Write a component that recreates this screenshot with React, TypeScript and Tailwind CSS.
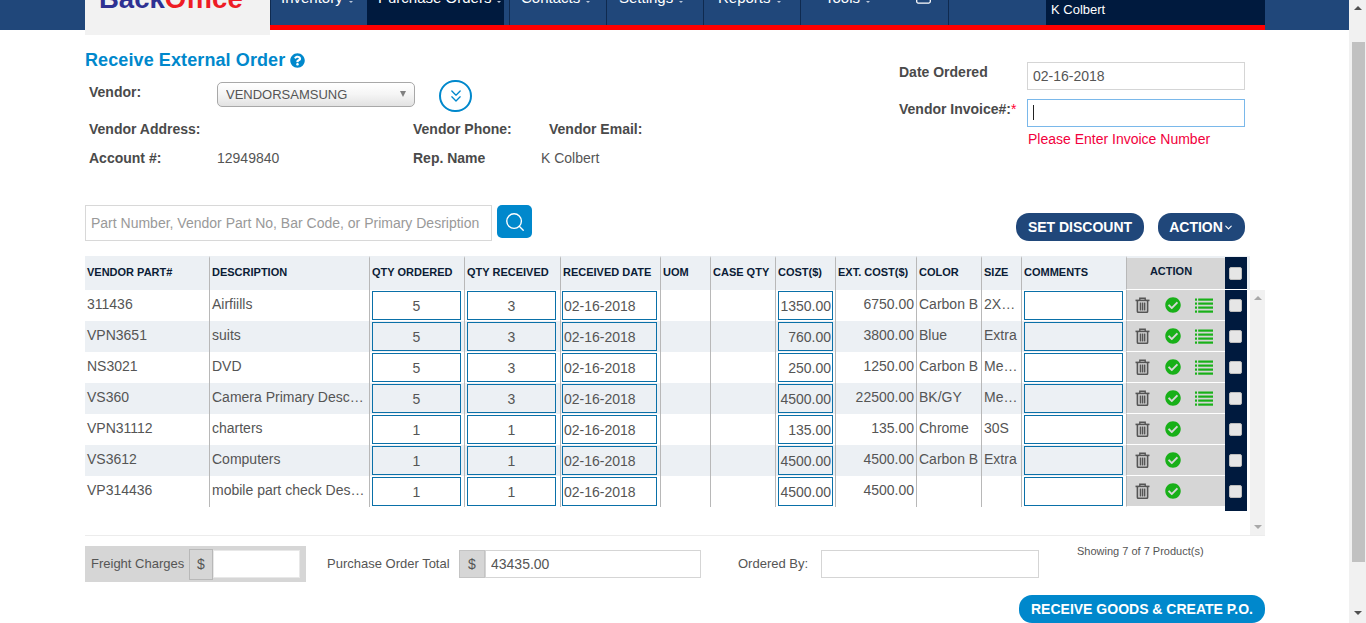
import React from 'react';
import { ChevronDown, ChevronsDown, Search } from 'lucide-react';
import { FaCheckCircle, FaQuestionCircle } from 'react-icons/fa';

interface OrderRow {
    part: string;
    description: string;
    ordered: string;
    received: string;
    cost: string;
    extCost: string;
    color: string;
    size: string;
    hasDetails: boolean;
}

const ROWS: OrderRow[] = [
    { part: '311436', description: 'Airfiills', ordered: '5', received: '3', cost: '1350.00', extCost: '6750.00', color: 'Carbon B', size: '2XL Long', hasDetails: true },
    { part: 'VPN3651', description: 'suits', ordered: '5', received: '3', cost: '760.00', extCost: '3800.00', color: 'Blue', size: 'Extra', hasDetails: true },
    { part: 'NS3021', description: 'DVD', ordered: '5', received: '3', cost: '250.00', extCost: '1250.00', color: 'Carbon B', size: 'Medium', hasDetails: true },
    { part: 'VS360', description: 'Camera Primary Description', ordered: '5', received: '3', cost: '4500.00', extCost: '22500.00', color: 'BK/GY', size: 'Medium', hasDetails: true },
    { part: 'VPN31112', description: 'charters', ordered: '1', received: '1', cost: '135.00', extCost: '135.00', color: 'Chrome', size: '30S', hasDetails: false },
    { part: 'VS3612', description: 'Computers', ordered: '1', received: '1', cost: '4500.00', extCost: '4500.00', color: 'Carbon B', size: 'Extra', hasDetails: false },
    { part: 'VP314436', description: 'mobile part check Description', ordered: '1', received: '1', cost: '4500.00', extCost: '4500.00', color: '', size: '', hasDetails: false },
];

const HEADERS = ['VENDOR PART#', 'DESCRIPTION', 'QTY ORDERED', 'QTY RECEIVED', 'RECEIVED DATE', 'UOM', 'CASE QTY', 'COST($)', 'EXT. COST($)', 'COLOR', 'SIZE', 'COMMENTS'];
const COL_WIDTHS = [124, 160, 95, 96, 100, 50, 65, 60, 81, 65, 40, 105, 99, 22];

const NavItem: React.FC<{ label: string; width: string; pad: string; active?: boolean }> = ({ label, width, pad, active }) => (
    <div className={`${width} ${pad} h-full border-l border-[#0f2a4f] ${active ? 'bg-[#001a3e] border-l-[#001a3e]' : ''}`}>
        <div className="-mt-[10px] flex items-end text-[15px] leading-[15px] text-white">
            {label}
            <span className="ml-[6px] mb-[2px] w-0 h-0 border-x-[2px] border-t-[2px] border-x-transparent border-t-[#b9c6d8]" />
        </div>
    </div>
);

const TrashIcon: React.FC = () => (
    <svg width="15" height="16" viewBox="0 0 15 16" className="shrink-0">
        <path d="M4.8 3V1.2h5.4V3" fill="none" stroke="#555" strokeWidth="1.4" />
        <rect x="0.5" y="2.6" width="14" height="1.6" fill="#555" />
        <path d="M2.4 4v10.2c0 .7.5 1.1 1.1 1.1h8c.6 0 1.1-.4 1.1-1.1V4" fill="none" stroke="#555" strokeWidth="1.6" />
        <rect x="4.7" y="5.5" width="1.5" height="8" fill="#555" />
        <rect x="6.8" y="5.5" width="1.5" height="8" fill="#555" />
        <rect x="8.9" y="5.5" width="1.5" height="8" fill="#555" />
    </svg>
);

const ListIcon: React.FC = () => (
    <svg width="18" height="15" viewBox="0 0 18 15" fill="#18b018" className="shrink-0 ml-[14px]">
        {[0.5, 4.5, 8.5, 12.5].map(y => (
            <React.Fragment key={y}>
                <rect x="0" y={y} width="2" height="2.2" />
                <rect x="3.2" y={y} width="14.8" height="2.2" />
            </React.Fragment>
        ))}
    </svg>
);

const CellInput: React.FC<{ value?: string; width: string; align?: string }> = ({ value = '', width, align = 'text-left' }) => (
    <input
        readOnly
        value={value}
        className={`${width} ${align} block h-[29px] mt-[1px] border border-[#0a70a8] bg-transparent px-[1px] text-[14px] text-[#555] outline-none`}
    />
);

const CheckBox: React.FC = () => (
    <input type="checkbox" className="appearance-none block ml-[4px] w-[13px] h-[13px] rounded-[2px] border border-[#bdbdbd] bg-[#e6e6e6]" />
);

const App: React.FC = () => {
    const cellBase = 'p-0 align-top border-l border-[#b8b8b8] h-[31px]';
    const textCell = `${cellBase} px-[2px] pt-[5px] text-[14px] leading-[18px] text-[#555] truncate`;

    return (
        <div className="flex h-[623px] overflow-hidden bg-white font-['Liberation_Sans',Arial,sans-serif] text-[14px] text-[#555]">
            <div className="w-[1349px] shrink-0">
                {/* top bar, page is scrolled a bit so it gets cut off */}
                <header className="h-[30px] bg-[#20477a] pl-[85px] pr-[84px] flex">
                    <div className="w-[185px] h-[35px] shrink-0 bg-[#f2f2f2] pl-[14px] relative z-10">
                        <div className="-mt-[15px] text-[27.5px] leading-[28px] font-bold">
                            <span className="text-[#2e3192]">Back</span>
                            <span className="text-[#ee1c25]">Office</span>
                        </div>
                    </div>
                    <nav className="flex-1 h-[30px] border-b-[5px] border-[#ff0000] flex">
                        <NavItem label="Inventory" width="w-[97px]" pad="pl-[10px]" />
                        <NavItem label="Purchase Orders" width="w-[137px]" pad="pl-[10px]" active />
                        <div className="w-[5px]" />
                        <NavItem label="Contacts" width="w-[97px]" pad="pl-[11px]" />
                        <NavItem label="Settings" width="w-[97px]" pad="pl-[12px]" />
                        <NavItem label="Reports" width="w-[97px]" pad="pl-[14px]" />
                        <div className="w-[148px] h-full border-l border-[#0f2a4f] pl-[24px] flex">
                            <div className="-mt-[10px] flex items-end h-[15px] text-[15px] leading-[15px] text-white">
                                Tools
                                <span className="ml-[6px] mb-[2px] w-0 h-0 border-x-[2px] border-t-[2px] border-x-transparent border-t-[#b9c6d8]" />
                            </div>
                            <svg width="15" height="12" viewBox="0 0 15 12" className="ml-[46px] -mt-[8px]" fill="none" stroke="#fff" strokeWidth="1.3">
                                <rect x="0.7" y="0.7" width="13.6" height="10.4" rx="1.5" />
                            </svg>
                        </div>
                        <div className="w-[98px] h-full border-l border-[#0f2a4f]" />
                        <div className="flex-1 h-full bg-[#001a3e] pl-[5px] pt-[1px] text-[13px] leading-[18px] text-white">K Colbert</div>
                    </nav>
                </header>

                <main className="pl-[85px] pr-[84px]">
                    {/* order details */}
                    <section className="flex justify-between h-[175px] pr-[20px]">
                        <div className="w-[700px]">
                            <h1 className="mt-[20px] flex items-center text-[18px] leading-[20px] font-bold tracking-[0.1px] text-[#0088cc]">
                                Receive External Order
                                <FaQuestionCircle className="ml-[5px] text-[15px]" />
                            </h1>
                            <div className="mt-[12px] flex items-start pl-[4px]">
                                <label className="w-[128px] leading-[20px] font-bold text-[#4a4a4a]">Vendor:</label>
                                <div className="relative w-[198px] h-[25px]">
                                    <select className="appearance-none w-full h-full rounded-[5px] border border-[#a8a8a8] bg-gradient-to-b from-white via-[#f5f5f5] to-[#e2e2e2] pl-[8px] text-[13px] text-[#555] outline-none">
                                        <option>VENDORSAMSUNG</option>
                                    </select>
                                    <span className="absolute right-[9px] top-[9px] w-0 h-0 border-x-[3px] border-t-[6px] border-x-transparent border-t-[#808080]" />
                                </div>
                                <button className="ml-[24px] -mt-[2px] w-[33px] h-[32px] rounded-full border-2 border-[#0088cc] flex items-center justify-center text-[#0088cc]">
                                    <ChevronsDown size={20} strokeWidth={1.6} />
                                </button>
                            </div>
                            <div className="mt-[8px] flex pl-[4px] font-bold text-[#4a4a4a] leading-[18px]">
                                <span className="w-[324px]">Vendor Address:</span>
                                <span className="w-[136px]">Vendor Phone:</span>
                                <span>Vendor Email:</span>
                            </div>
                            <div className="mt-[11px] flex pl-[4px] leading-[18px]">
                                <span className="w-[128px] font-bold text-[#4a4a4a]">Account #:</span>
                                <span className="w-[196px]">12949840</span>
                                <span className="w-[128px] font-bold text-[#4a4a4a]">Rep. Name</span>
                                <span>K Colbert</span>
                            </div>
                        </div>
                        <div className="w-[346px] pt-[32px]">
                            <div className="flex">
                                <label className="w-[128px] mt-[1px] font-bold text-[#4a4a4a] leading-[18px]">Date Ordered</label>
                                <input readOnly value="02-16-2018" className="w-[218px] h-[28px] border border-[#d5d5d5] px-[5px] text-[14px] text-[#555] outline-none" />
                            </div>
                            <div className="flex mt-[9px]">
                                <label className="w-[128px] mt-[1px] font-bold text-[#4a4a4a] leading-[18px]">
                                    Vendor Invoice#:<span className="font-normal text-[#ff0033]">*</span>
                                </label>
                                <div className="relative w-[218px] h-[28px] border border-[#7ab8ea]">
                                    <span className="absolute left-[5px] top-[5px] w-px h-[15px] bg-[#222]" />
                                </div>
                            </div>
                            <p className="mt-[3px] ml-[129px] leading-[18px] text-[#f2003c]">Please Enter Invoice Number</p>
                        </div>
                    </section>

                    {/* product search and bulk actions */}
                    <section className="flex items-start justify-between h-[51px]">
                        <div className="flex items-start">
                            <input
                                placeholder="Part Number, Vendor Part No, Bar Code, or Primary Desription"
                                className="w-[407px] h-[36px] border border-[#d8d8d8] px-[5px] text-[14px] text-[#555] placeholder:text-[#999] outline-none"
                            />
                            <button className="ml-[5px] w-[35px] h-[33px] rounded-[5px] bg-[#0088cc] flex items-center justify-center text-white">
                                <Search size={22} strokeWidth={1.5} />
                            </button>
                        </div>
                        <div className="flex pt-[8px] pr-[20px]">
                            <button className="w-[128px] h-[28px] rounded-[13px] bg-[#20477a] text-[14px] font-bold text-white">SET DISCOUNT</button>
                            <button className="ml-[14px] w-[87px] h-[28px] rounded-[13px] bg-[#20477a] text-[14px] font-bold text-white flex items-center justify-center">
                                ACTION
                                <ChevronDown size={11} strokeWidth={2.5} />
                            </button>
                        </div>
                    </section>

                    {/* products */}
                    <section className="flex h-[280px] border-b border-[#ececec]">
                        <table className="table-fixed w-[1162px] h-fit border-separate border-spacing-0">
                            <colgroup>
                                {COL_WIDTHS.map((w, i) => (
                                    <col key={i} style={{ width: w }} />
                                ))}
                            </colgroup>
                            <thead>
                                <tr className="bg-[#ecf0f4]">
                                    {HEADERS.map((h, i) => (
                                        <th
                                            key={h}
                                            className={`h-[34px] p-0 pb-[4px] pl-[2px] text-left align-middle border-t-2 border-t-[#ecf0f4] text-[11px] font-bold text-[#0b1c36] whitespace-nowrap ${i > 0 ? 'border-l border-l-[#b8b8b8]' : ''} ${h === 'RECEIVED DATE' ? 'pl-[1px]' : ''}`}
                                        >
                                            {h}
                                        </th>
                                    ))}
                                    <th className="p-0 pb-[4px] pr-[10px] border-t-2 border-t-[#ecf0f4] border-l border-l-[#b8b8b8] border-b border-b-white bg-[#d6d6d6] text-[11px] font-bold text-[#0b1c36] text-center">ACTION</th>
                                    <th className="p-0 border-t border-t-[#ecf0f4] border-b border-b-white bg-[#001a3e]">
                                        <CheckBox />
                                    </th>
                                </tr>
                            </thead>
                            <tbody>
                                {ROWS.map((row, index) => (
                                    <tr key={row.part} className={index % 2 === 1 ? 'bg-[#ecf0f4]' : ''}>
                                        <td className={`${textCell} border-l-0`}>{row.part}</td>
                                        <td className={textCell}>{row.description}</td>
                                        <td className={`${cellBase} pl-[2px]`}>
                                            <CellInput value={row.ordered} width="w-[89px]" align="text-center" />
                                        </td>
                                        <td className={`${cellBase} pl-[2px]`}>
                                            <CellInput value={row.received} width="w-[89px]" align="text-center" />
                                        </td>
                                        <td className={`${cellBase} pl-[1px]`}>
                                            <CellInput value="02-16-2018" width="w-[95px]" />
                                        </td>
                                        <td className={cellBase} />
                                        <td className={cellBase} />
                                        <td className={`${cellBase} pl-[2px]`}>
                                            <CellInput value={row.cost} width="w-[55px]" align="text-right" />
                                        </td>
                                        <td className={`${textCell} text-right`}>{row.extCost}</td>
                                        <td className={textCell}>{row.color}</td>
                                        <td className={textCell}>{row.size}</td>
                                        <td className={`${cellBase} pl-[2px]`}>
                                            <CellInput width="w-[99px]" />
                                        </td>
                                        <td className={`${cellBase} border-b border-b-white bg-[#d6d6d6]`}>
                                            <div className="flex items-center h-[30px] pl-[8px]">
                                                <TrashIcon />
                                                <FaCheckCircle className="ml-[15px] w-[16px] h-[16px] text-[#18b018]" />
                                                {row.hasDetails && <ListIcon />}
                                            </div>
                                        </td>
                                        <td className="p-0 align-middle bg-[#001a3e] relative">
                                            <CheckBox />
                                            {index === ROWS.length - 1 && <div className="absolute left-0 top-full w-full h-[4px] bg-[#001a3e]" />}
                                        </td>
                                    </tr>
                                ))}
                            </tbody>
                        </table>
                        <div className="w-[18px] flex flex-col">
                            <div className="w-[3px] h-[34px] bg-[#ecf0f4]" />
                            <div className="ml-[3px] flex-1 bg-[#f1f1f1] flex flex-col items-center justify-between py-[6px]">
                                <span className="w-0 h-0 border-x-[4px] border-b-[4px] border-x-transparent border-b-[#a8a8a8]" />
                                <span className="w-0 h-0 border-x-[4px] border-t-[4px] border-x-transparent border-t-[#a8a8a8]" />
                            </div>
                        </div>
                    </section>

                    {/* totals */}
                    <section className="mt-[10px] flex items-start h-[49px] text-[13px] whitespace-nowrap">
                        <div className="w-[221px] h-[36px] bg-[#d6d6d6] flex items-center pl-[6px]">
                            <span className="w-[98px]">Freight Charges</span>
                            <span className="w-[24px] h-[31px] border border-[#b8b8b8] flex items-center justify-center text-[14px]">$</span>
                            <input className="w-[87px] h-[28px] border border-[#e8e8e8] bg-white outline-none" />
                        </div>
                        <div className="ml-[21px] mt-[4px] flex items-center">
                            <span className="w-[132px]">Purchase Order Total</span>
                            <span className="w-[26px] h-[28px] border border-[#c4c4c4] bg-[#d6d6d6] flex items-center justify-center text-[14px]">$</span>
                            <input readOnly value="43435.00" className="w-[216px] h-[28px] border border-[#d5d5d5] px-[5px] text-[14px] text-[#555] outline-none" />
                        </div>
                        <div className="ml-[37px] mt-[4px] flex items-center">
                            <span className="w-[83px]">Ordered By:</span>
                            <input className="w-[218px] h-[28px] border border-[#d5d5d5] outline-none" />
                        </div>
                        <p className="ml-[38px] -mt-[1px] text-[11px] leading-[12px]">Showing 7 of 7 Product(s)</p>
                    </section>
                    <div className="flex justify-end">
                        <button className="w-[246px] h-[28px] rounded-[13px] bg-[#0088cc] text-[14px] font-bold text-white">RECEIVE GOODS &amp; CREATE P.O.</button>
                    </div>
                </main>
            </div>

            {/* page scrollbar */}
            <div className="w-[17px] h-[623px] bg-[#f1f1f1] flex flex-col items-center pt-[6px]">
                <span className="w-0 h-0 border-x-[4px] border-b-[4px] border-x-transparent border-b-[#505050]" />
                <div className="mt-[32px] ml-[1px] w-[13px] h-[520px] bg-[#c1c1c1]" />
                <span className="mt-[49px] w-0 h-0 border-x-[4px] border-t-[4px] border-x-transparent border-t-[#505050]" />
            </div>
        </div>
    );
};

export default App;
